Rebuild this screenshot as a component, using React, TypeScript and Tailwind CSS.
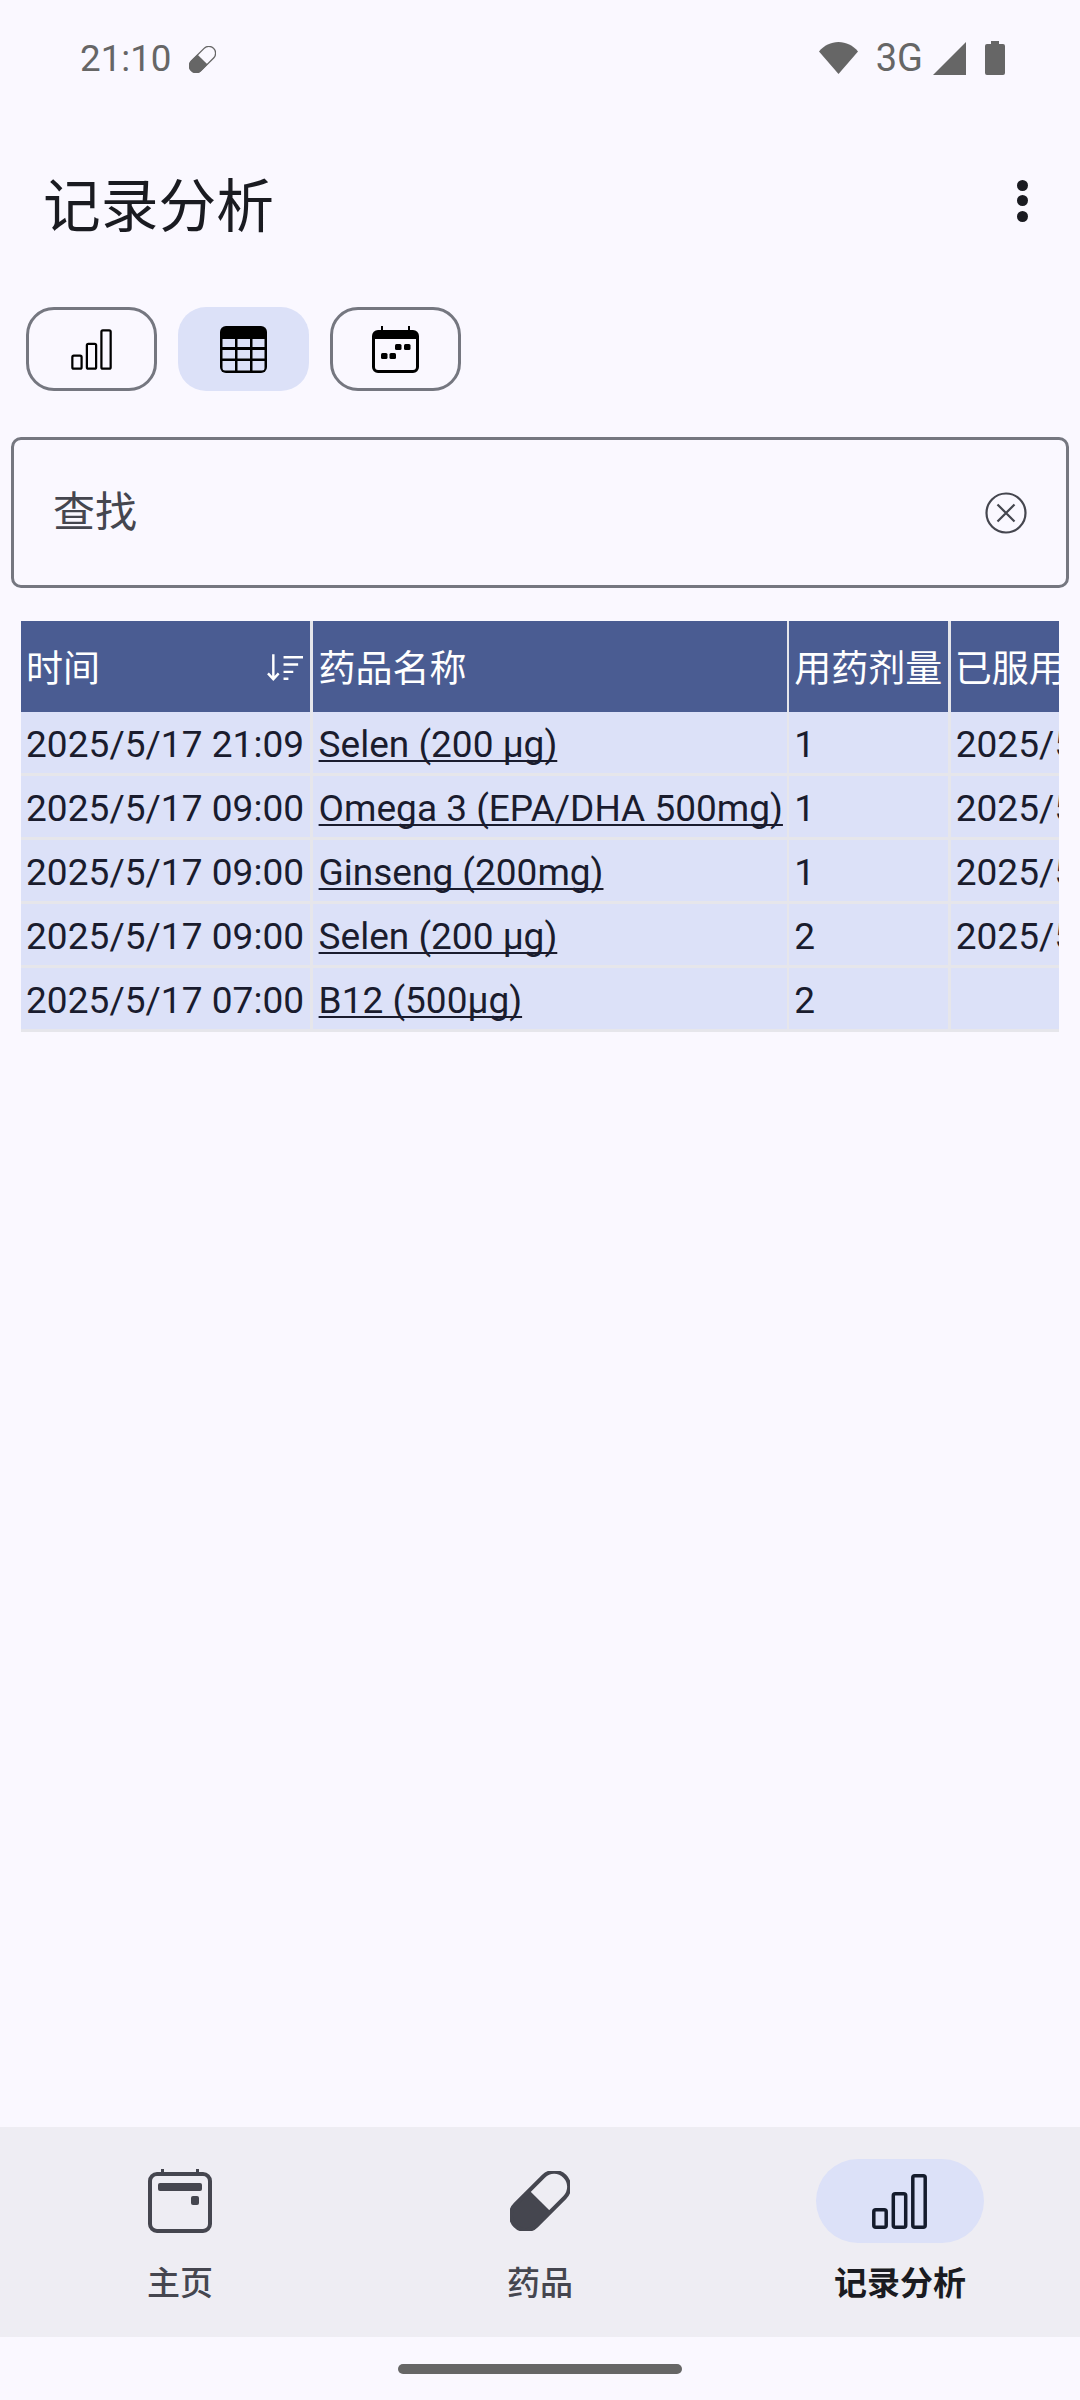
const rows = [
  { time: '2025/5/17 21:09', name: 'Selen (200 µg)', dose: '1', taken: '2025/5/17 21:09' },
  { time: '2025/5/17 09:00', name: 'Omega 3 (EPA/DHA 500mg)', dose: '1', taken: '2025/5/17 21:09' },
  { time: '2025/5/17 09:00', name: 'Ginseng (200mg)', dose: '1', taken: '2025/5/17 21:09' },
  { time: '2025/5/17 09:00', name: 'Selen (200 µg)', dose: '2', taken: '2025/5/17 21:09' },
  { time: '2025/5/17 07:00', name: 'B12 (500µg)', dose: '2', taken: '' },
];

const gridCols = 'grid grid-cols-[289px_474px_159px_200px] gap-x-[2.6px]';

function BarsIcon({ className, stroke }: { className: string; stroke: number }) {
  return (
    <svg viewBox="0 0 55 55" fill="none" stroke="currentColor" strokeWidth={stroke} className={className}>
      <rect x="1.8" y="35.8" width="12.4" height="17.4" rx="2" />
      <rect x="21.3" y="19.8" width="12.4" height="33.4" rx="2" />
      <rect x="40.8" y="1.8" width="12.4" height="51.4" rx="2" />
    </svg>
  );
}

function TableIcon() {
  return (
    <svg viewBox="0 0 47 47" className="w-[47px] h-[47px] text-black">
      <path fill="currentColor" d="M6 0h35a6 6 0 0 1 6 6v35a6 6 0 0 1-6 6H6a6 6 0 0 1-6-6V6a6 6 0 0 1 6-6z" />
      <g fill="#dce1f8">
        <path d="M2.5 13h12.5v8H2.5zM17.5 13h12.5v8H17.5zM32.5 13h12v8h-12z" />
        <path d="M2.5 24h12.5v8.5H2.5zM17.5 24h12.5v8.5H17.5zM32.5 24h12v8.5h-12z" />
        <path d="M2.5 35h12.5v9.5H5a2.5 2.5 0 0 1-2.5-2.5zM17.5 35h12.5v9.5H17.5zM32.5 35h12v7a2.5 2.5 0 0 1-2.5 2.5h-9.5z" />
      </g>
    </svg>
  );
}

function CalendarDotsIcon() {
  return (
    <svg viewBox="0 0 47 47" className="w-[47px] h-[47px] text-black">
      <path fill="currentColor" d="M9 0h2v4h25V0h2v4h3a6 6 0 0 1 6 6v31a6 6 0 0 1-6 6H6a6 6 0 0 1-6-6V10a6 6 0 0 1 6-6h3z" />
      <path fill="#faf8ff" d="M3 13h41v28a3 3 0 0 1-3 3H6a3 3 0 0 1-3-3z" />
      <g fill="currentColor">
        <rect x="23" y="18" width="6.5" height="6" rx="1.5" />
        <rect x="32" y="18" width="6.5" height="6" rx="1.5" />
        <rect x="9" y="27" width="6.5" height="6" rx="1.5" />
        <rect x="17.5" y="27" width="6.5" height="6" rx="1.5" />
      </g>
    </svg>
  );
}

function HomeIcon() {
  return (
    <svg viewBox="0 0 64 64" className="w-[64px] h-[64px] text-[#45464f]">
      <path fill="currentColor" d="M13 0h3v4h-3zM48 0h3v4h-3z" />
      <rect x="2" y="5" width="60" height="57" rx="7" fill="none" stroke="currentColor" strokeWidth="4" />
      <rect x="10" y="14" width="44" height="8" rx="2" fill="currentColor" />
      <rect x="43" y="27" width="8" height="9" rx="2" fill="currentColor" />
    </svg>
  );
}

function PillIcon({ className, stroke }: { className: string; stroke: number }) {
  return (
    <svg viewBox="0 0 60 60" className={className}>
      <g transform="rotate(-45 30 30)">
        <path fill="currentColor" d="M30 14H10a16 16 0 0 0 0 32h20z" />
        <rect x="-5" y="15" width="70" height="30" rx="15" fill="none" stroke="currentColor" strokeWidth={stroke} />
      </g>
    </svg>
  );
}

function SortIcon() {
  return (
    <svg viewBox="0 0 37 28" fill="none" stroke="white" strokeWidth="2.5" className="w-[36px] h-[28px]">
      <path d="M6.5 1v25M1 20.5l5.5 6 5.5-6" />
      <path d="M17 4h20M17 11.5h15M17 19h10M17 26h5" />
    </svg>
  );
}

function ClearIcon() {
  return (
    <svg viewBox="0 0 42 42" fill="none" stroke="#45464f" strokeWidth="2.2" className="w-[42px] h-[42px]">
      <circle cx="21" cy="21" r="19.5" />
      <path d="M12.5 12.5l17 17M29.5 12.5l-17 17" />
    </svg>
  );
}

function StatusBar() {
  return (
    <div className="h-[116px] flex items-center justify-between pl-[80px] pr-[75px] text-[#666666] text-[36.75px]">
      <div className="flex items-center gap-[17px]">
        <span className="pt-[2px]">21:10</span>
        <PillIcon className="w-[27px] h-[27px] mt-[3px]" stroke={3} />
      </div>
      <div className="flex items-center">
        <svg viewBox="0 0 39 32" className="w-[39px] h-[32px]">
          <path fill="currentColor" d="M0 9.5C5 3.5 12 0 19.5 0S34 3.5 39 9.5L19.5 32z" />
        </svg>
        <span className="ml-[18px] text-[38px] leading-none">3G</span>
        <svg viewBox="0 0 33 33" className="ml-[10px] w-[33px] h-[33px]">
          <path fill="currentColor" d="M33 0v33H0z" />
        </svg>
        <svg viewBox="0 0 20 34" className="ml-[19px] w-[20px] h-[34px]">
          <path fill="currentColor" d="M6 0h8v3h4a2 2 0 0 1 2 2v27a2 2 0 0 1-2 2H2a2 2 0 0 1-2-2V5a2 2 0 0 1 2-2h4z" />
        </svg>
      </div>
    </div>
  );
}

function DataTable() {
  return (
    <div className="mt-[33px] ml-[21px] w-[1038px] overflow-hidden bg-[#e6e6eb] text-[37px] leading-none">
      <div className={gridCols + ' h-[91px] text-white'}>
        <div className="bg-[#4a5c92] pl-[5px] pr-[7px] flex items-center justify-between">
          <span className="pt-[5px]">时间</span>
          <SortIcon />
        </div>
        <div className="bg-[#4a5c92] pl-[6px] pt-[5px] flex items-center">药品名称</div>
        <div className="bg-[#4a5c92] pl-[5px] pt-[5px] flex items-center whitespace-nowrap">用药剂量</div>
        <div className="bg-[#4a5c92] pl-[4px] pt-[5px] flex items-center whitespace-nowrap overflow-hidden">已服用时间</div>
      </div>
      {rows.map((row, i) => (
        <div key={i} className={gridCols + ' h-[64px] pb-[3px] text-[#1a1c2e]'}>
          <div className="bg-[#dce1f8] px-[5px] pt-[3px] flex items-center whitespace-nowrap tracking-[0.05px]">{row.time}</div>
          <div className="bg-[#dce1f8] pl-[6px] pt-[3px] flex items-center whitespace-nowrap">
            <span className="underline decoration-[1.5px] underline-offset-[3px] [text-decoration-skip-ink:none]">{row.name}</span>
          </div>
          <div className="bg-[#dce1f8] pl-[5px] pt-[3px] flex items-center">{row.dose}</div>
          <div className="bg-[#dce1f8] pl-[5px] pt-[3px] flex items-center whitespace-nowrap overflow-hidden">{row.taken}</div>
        </div>
      ))}
    </div>
  );
}

export default function App() {
  return (
    <div className="w-[1080px] h-[2400px] flex flex-col bg-[#faf8ff] font-['Roboto','Noto_Sans_CJK_SC',sans-serif] overflow-hidden">
      <StatusBar />

      <div className="h-[178px] flex items-center justify-between pl-[43px] pr-[52px]">
        <h1 className="text-[57.75px] font-normal text-[#1a1b21] pt-[5px]">记录分析</h1>
        <div className="flex flex-col gap-[4.5px] mb-[9px]">
          <span className="w-[11px] h-[11px] rounded-full bg-[#1a1b21]" />
          <span className="w-[11px] h-[11px] rounded-full bg-[#1a1b21]" />
          <span className="w-[11px] h-[11px] rounded-full bg-[#1a1b21]" />
        </div>
      </div>

      <div className="mt-[13px] pl-[26px] flex gap-[21px]">
        <button className="w-[131px] h-[84px] rounded-[28px] border-[3px] border-[#757780] flex items-center justify-center text-black">
          <BarsIcon className="w-[41px] h-[41px]" stroke={3} />
        </button>
        <button className="w-[131px] h-[84px] rounded-[28px] bg-[#dce1f8] flex items-center justify-center">
          <TableIcon />
        </button>
        <button className="w-[131px] h-[84px] rounded-[28px] border-[3px] border-[#757780] flex items-center justify-center">
          <CalendarDotsIcon />
        </button>
      </div>

      <div className="mt-[46px] mx-[11px] h-[151px] rounded-[10px] border-[3px] border-[#757780] flex items-center justify-between pl-[39px] pr-[39px]">
        <span className="text-[42px] text-[#45464f]">查找</span>
        <ClearIcon />
      </div>

      <DataTable />

      <div className="flex-1" />

      <nav className="h-[210px] bg-[#eeedf3] grid grid-cols-3">
        <div className="flex flex-col items-center pt-[32px]">
          <div className="h-[84px] flex items-center justify-center"><HomeIcon /></div>
          <span className="mt-[21px] text-[33px] leading-[40px] font-medium text-[#45464f]">主页</span>
        </div>
        <div className="flex flex-col items-center pt-[32px]">
          <div className="h-[84px] flex items-center justify-center">
            <PillIcon className="w-[60px] h-[60px] text-[#45464f]" stroke={4} />
          </div>
          <span className="mt-[21px] text-[33px] leading-[40px] font-medium text-[#45464f]">药品</span>
        </div>
        <div className="flex flex-col items-center pt-[32px]">
          <div className="w-[168px] h-[84px] rounded-full bg-[#dce1f8] flex items-center justify-center text-[#141b2c]">
            <BarsIcon className="w-[55px] h-[55px] mr-[1px]" stroke={3.5} />
          </div>
          <span className="mt-[21px] text-[33px] leading-[40px] font-bold text-[#1a1b21]">记录分析</span>
        </div>
      </nav>

      <div className="h-[63px] flex justify-center pt-[27px]">
        <div className="w-[284px] h-[10px] rounded-full bg-[#666666]" />
      </div>
    </div>
  );
}
